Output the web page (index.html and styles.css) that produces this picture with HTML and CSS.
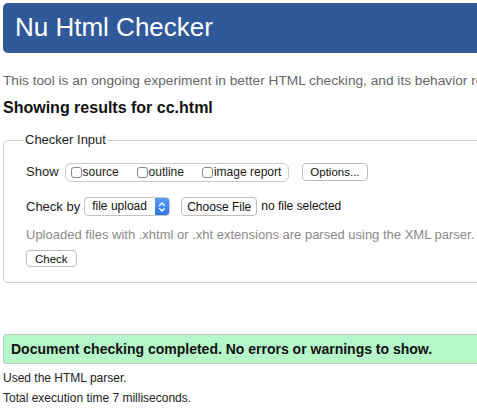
FILE: index.html
```html
<!DOCTYPE html>
<html lang="en">
<head>
<meta charset="utf-8">
<title>Nu Html Checker</title>
<link rel="stylesheet" href="styles.css">
</head>
<body>
<div class="page">
  <h1 class="banner">Nu Html Checker</h1>
  <p class="intro">This tool is an ongoing experiment in better HTML checking, and its behavior remains subject to change</p>
  <h2 class="results-title">Showing results for cc.html</h2>

  <fieldset class="checker">
    <legend class="checker-legend">Checker Input</legend>

    <div class="row row-show">
      <span class="row-label">Show</span>
      <div class="show-group">
        <label class="opt"><input type="checkbox" class="cb"><span>source</span></label>
        <label class="opt"><input type="checkbox" class="cb"><span>outline</span></label>
        <label class="opt"><input type="checkbox" class="cb"><span>image report</span></label>
      </div>
      <button class="btn btn-options" type="button">Options...</button>
    </div>

    <div class="row row-checkby">
      <span class="row-label">Check by</span>
      <div class="select">
        <span class="select-text">file upload</span>
        <span class="select-arrow">
          <svg width="8" height="12" viewBox="0 0 8 12"><path d="M1.5 4.5 L4 2 L6.5 4.5 M1.5 7.5 L4 10 L6.5 7.5" fill="none" stroke="#fff" stroke-width="1.3" stroke-linecap="round" stroke-linejoin="round"/></svg>
        </span>
      </div>
      <button class="btn btn-file" type="button">Choose File</button>
      <span class="file-status">no file selected</span>
    </div>

    <p class="hint">Uploaded files with .xhtml or .xht extensions are parsed using the XML parser.</p>

    <button class="btn btn-check" type="button">Check</button>
  </fieldset>

  <div class="success">Document checking completed. No errors or warnings to show.</div>
  <p class="meta">Used the HTML parser.</p>
  <p class="meta">Total execution time 7 milliseconds.</p>
</div>
</body>
</html>
```

FILE: styles.css
```css
html {
  overflow: hidden;
}

body {
  margin: 3px 0 0 3px;
  font-family: "Liberation Sans", Arial, Helvetica, sans-serif;
  color: #1a1a1a;
  background: #fff;
}

.page {
  width: 640px;
}

.banner {
  margin: 0;
  height: 50px;
  line-height: 48px;
  padding-left: 12px;
  font-size: 26px;
  font-weight: normal;
  color: #fff;
  background: #30599a;
  border-radius: 5px;
}

.intro {
  margin: 19px 0 0;
  font-size: 13.7px;
  line-height: 17px;
  color: #666;
  white-space: nowrap;
}

.results-title {
  margin: 9px 0 0;
  font-size: 16px;
  line-height: 19px;
  font-weight: bold;
  color: #111;
}

.checker {
  margin: 15px 0 0;
  padding: 14px 22px 15px;
  border: 1px solid #cfcfcf;
  border-radius: 5px;
  min-inline-size: 0;
}

.checker-legend {
  margin-left: -2px;
  padding: 0 1px;
  font-size: 13px;
  line-height: 16px;
  color: #222;
}

.row {
  display: flex;
  align-items: center;
  height: 20px;
}

.row-label {
  font-size: 13px;
  line-height: 16px;
  color: #222;
}

.row-show .row-label {
  margin-right: 6px;
}

.show-group {
  display: flex;
  align-items: center;
  gap: 18px;
  height: 19px;
  padding: 0 7px 0 5px;
  border: 1px solid #c8c8c8;
  border-radius: 6px;
  box-sizing: border-box;
}

.opt {
  display: flex;
  align-items: center;
  font-size: 12px;
  line-height: 15px;
  color: #222;
}

.cb {
  appearance: none;
  -webkit-appearance: none;
  margin: 0 1px 0 0;
  width: 11px;
  height: 11px;
  border: 1px solid #8a8a8a;
  border-radius: 3px;
  background: #fff;
  box-sizing: border-box;
}

.btn {
  font-family: "Liberation Sans", Arial, Helvetica, sans-serif;
  font-size: 11.5px;
  color: #111;
  background: #fff;
  border: 1px solid #bdbdbd;
  border-radius: 4px;
  padding: 0 7px;
  margin: 0;
  box-sizing: border-box;
}

.btn-options {
  margin-left: 13px;
  height: 18px;
  padding: 0 7px;
}

.row-checkby {
  margin-top: 15px;
  height: 19px;
}

.row-checkby .row-label {
  margin-right: 4px;
}

.select {
  display: flex;
  align-items: stretch;
  width: 86px;
  height: 19px;
  border: 1px solid #c4c4c4;
  border-radius: 4px;
  box-sizing: border-box;
  overflow: hidden;
  background: #fff;
}

.select-text {
  flex: 1;
  padding-left: 7px;
  font-size: 12px;
  line-height: 17px;
  color: #111;
}

.select-arrow {
  display: flex;
  align-items: center;
  justify-content: center;
  width: 14px;
  background: linear-gradient(#5a9cf5, #2f74e6);
}

.btn-file {
  margin-left: 11px;
  height: 19px;
  font-size: 12px;
  padding: 0 5px;
}

.file-status {
  margin-left: 4px;
  font-size: 12px;
  line-height: 15px;
  color: #111;
}

.hint {
  margin: 10px 0 0;
  font-size: 13px;
  line-height: 17px;
  color: #8a8a8a;
  white-space: nowrap;
}

.btn-check {
  display: block;
  margin-top: 7px;
  height: 17px;
  padding: 0 8px;
}

.success {
  margin-top: 51px;
  padding: 6px 7px 5px;
  font-size: 14px;
  line-height: 17px;
  font-weight: bold;
  color: #111;
  background: #b5f7c8;
  border: 1px solid #c6c6c6;
  border-radius: 3px;
}

.meta {
  margin: 0;
  font-size: 12px;
  line-height: 20px;
  color: #222;
}

.success + .meta {
  margin-top: 4px;
}
```
